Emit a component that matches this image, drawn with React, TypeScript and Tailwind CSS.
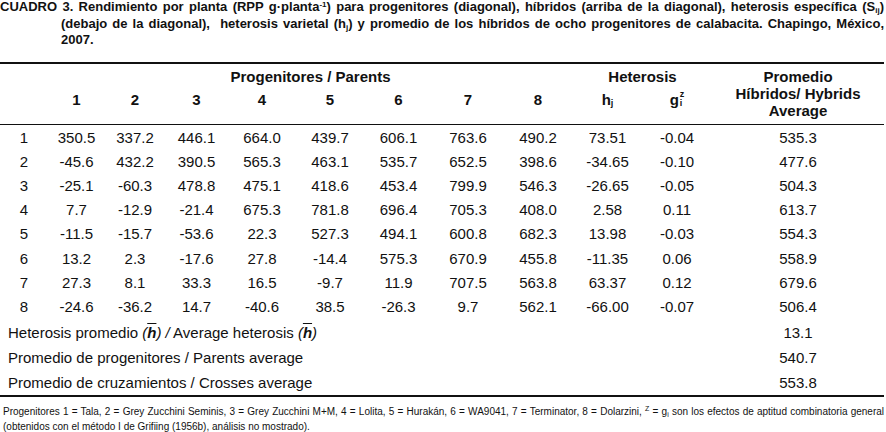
import React from "react";

const cols = "grid grid-cols-[48px_57px_60px_63px_68px_68px_69px_70px_70px_69px_70px_172px]";

const rows = [
  ["350.5", "337.2", "446.1", "664.0", "439.7", "606.1", "763.6", "490.2", "73.51", "-0.04", "535.3"],
  ["-45.6", "432.2", "390.5", "565.3", "463.1", "535.7", "652.5", "398.6", "-34.65", "-0.10", "477.6"],
  ["-25.1", "-60.3", "478.8", "475.1", "418.6", "453.4", "799.9", "546.3", "-26.65", "-0.05", "504.3"],
  ["7.7", "-12.9", "-21.4", "675.3", "781.8", "696.4", "705.3", "408.0", "2.58", "0.11", "613.7"],
  ["-11.5", "-15.7", "-53.6", "22.3", "527.3", "494.1", "600.8", "682.3", "13.98", "-0.03", "554.3"],
  ["13.2", "2.3", "-17.6", "27.8", "-14.4", "575.3", "670.9", "455.8", "-11.35", "0.06", "558.9"],
  ["27.3", "8.1", "33.3", "16.5", "-9.7", "11.9", "707.5", "563.8", "63.37", "0.12", "679.6"],
  ["-24.6", "-36.2", "14.7", "-40.6", "38.5", "-26.3", "9.7", "562.1", "-66.00", "-0.07", "506.4"],
];

const HBar = () => (
  <span className="italic">
    (<span className="font-bold overline">h</span>)
  </span>
);

const Summary = ({ label, value }: { label: React.ReactNode; value: string }) => (
  <div className={`${cols} h-[25px] items-center`}>
    <div className="col-span-11 pl-2">{label}</div>
    <div className="text-center">{value}</div>
  </div>
);

export default function App() {
  return (
    <div className="w-[886px] h-[432px] overflow-hidden bg-white text-[#111] font-['Liberation_Sans',Arial,sans-serif]">
      <div className="w-[884px]">
        {/* Title, lines broken as in the printed table */}
        <div className="-mt-px text-[13px] leading-[16.5px] font-bold">
          <div className="whitespace-nowrap text-justify [text-align-last:justify]">
            CUADRO 3. Rendimiento por planta (RPP g·planta<sup className="text-[8px]">-1</sup>) para progenitores
            (diagonal), híbridos (arriba de la diagonal), heterosis específica (S<sub className="text-[8px]">ij</sub>)
          </div>
          <div className="pl-[61px] whitespace-nowrap text-justify [text-align-last:justify]">
            (debajo de la diagonal),&nbsp; heterosis varietal (h<sub className="text-[8px]">j</sub>) y promedio de los
            híbridos de ocho progenitores de calabacita. Chapingo, México,
          </div>
          <div className="pl-[61px]">2007.</div>
        </div>

        {/* Table */}
        <div className="mt-[13px] border-t-2 border-[#111] text-[15px] leading-[17px]">
          <div className={`${cols} grid-rows-[23px_23px] mt-px mb-[13px] font-bold`}>
            <div className="col-start-2 col-span-8 self-center text-center">Progenitores / Parents</div>
            <div className="col-span-2 self-center text-center">Heterosis</div>
            <div className="row-span-2 pt-[3px] text-center leading-[17px]">
              Promedio
              <br />
              Híbridos/ Hybrids
              <br />
              Average
            </div>
            <div />
            {["1", "2", "3", "4", "5", "6", "7", "8"].map((h) => (
              <div key={h} className="self-center text-center">
                {h}
              </div>
            ))}
            <div className="self-center text-center">
              h<sub className="text-[9px] relative top-[1px]">j</sub>
            </div>
            <div className="self-center flex justify-center items-center">
              <span>g</span>
              <span className="inline-flex flex-col text-[9px] leading-[9px] ml-px">
                <span>z</span>
                <span>i</span>
              </span>
            </div>
          </div>

          <div className="border-t border-[#111] pt-[0.5px]">
            {rows.map((r, i) => (
              <div key={i} className={`${cols} h-[24.2px] items-center`}>
                <div className="text-center">{i + 1}</div>
                {r.map((v, j) => (
                  <div key={j} className="text-center">
                    {v}
                  </div>
                ))}
              </div>
            ))}
          </div>

          <div className="mt-[1.5px]">
            <Summary
              label={
                <>
                  Heterosis promedio <HBar /> <span className="italic">/</span> Average heterosis <HBar />
                </>
              }
              value="13.1"
            />
            <Summary label="Promedio de progenitores / Parents average" value="540.7" />
            <Summary label="Promedio de cruzamientos / Crosses average" value="553.8" />
          </div>
        </div>

        <div className="border-t-2 border-[#111]" />

        {/* Footnote */}
        <p className="mt-[7px] pl-[3px] text-[10px] leading-[15px] text-justify">
          Progenitores 1 = Tala, 2 = Grey Zucchini Seminis, 3 = Grey Zucchini M+M, 4 = Lolita, 5 = Hurakán, 6 = WA9041, 7 =
          Terminator, 8 = Dolarzini, <span className="relative -top-[4px] text-[7px] leading-none">Z</span> = g
          <span className="relative top-[2px] text-[7px] leading-none">i</span> son los efectos de aptitud combinatoria
          general (obtenidos con el método I de Grifiing (1956b), análisis no mostrado).
        </p>
      </div>
    </div>
  );
}
